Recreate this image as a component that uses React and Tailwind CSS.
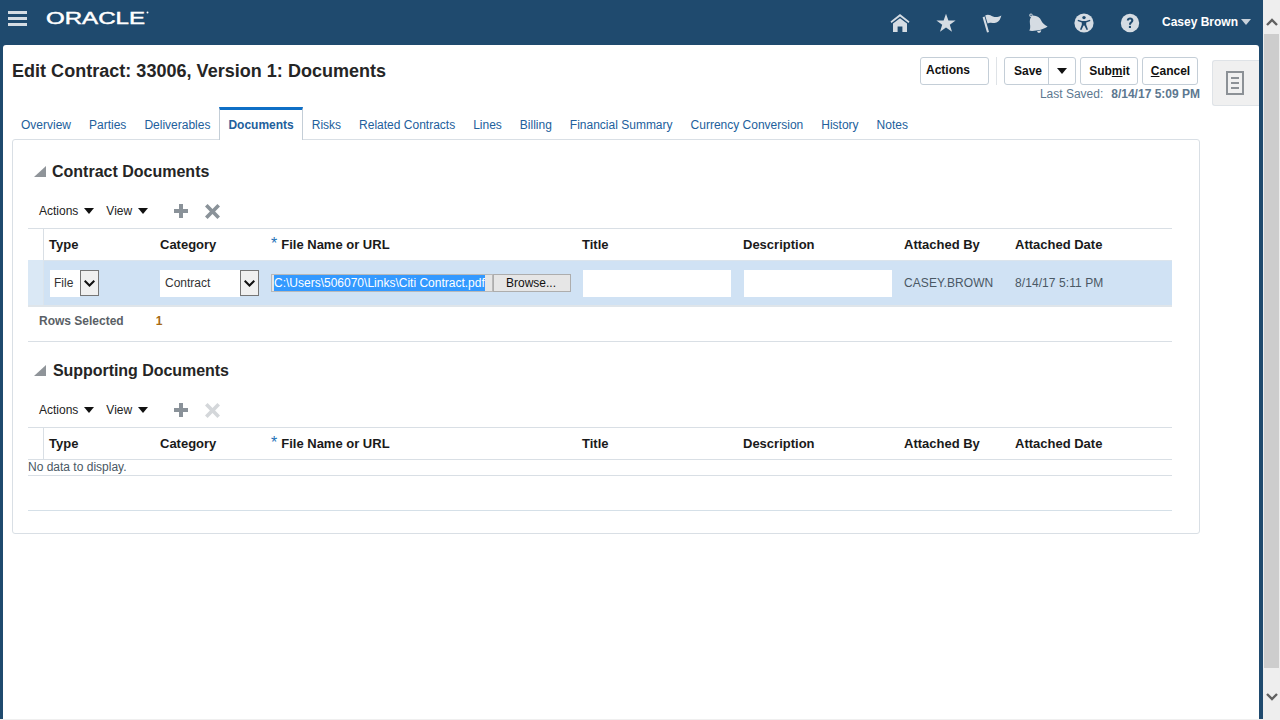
import React from "react";

const Font = "font-['Liberation_Sans',Arial,sans-serif]";

function Home() {
  return (
    <svg width="20" height="20" viewBox="0 0 20 20" fill="#d5dce3">
      <path d="M10 1 L19.5 8.5 L18.5 10 L10 3.4 L1.5 10 L0.5 8.5 Z" />
      <path d="M10 5.2 L17 10.6 L17 19 L12.4 19 L12.4 13.5 L7.6 13.5 L7.6 19 L3 19 L3 10.6 Z" />
    </svg>
  );
}
function Star() {
  return (
    <svg width="20" height="20" viewBox="0 0 20 20" fill="#d5dce3">
      <path d="M10 0.8 L12.4 7.4 L19.6 7.4 L13.8 11.7 L16 18.8 L10 14.5 L4 18.8 L6.2 11.7 L0.4 7.4 L7.6 7.4 Z" />
    </svg>
  );
}
function Flag() {
  return (
    <svg width="20" height="20" viewBox="0 0 20 20" fill="#d5dce3">
      <path d="M0.6 4.2 L2.6 3.6 L7 19 L5 19.6 Z" />
      <path d="M3.2 2.6 C6 0.6 8.5 2.4 11 3.4 C13.5 4.4 16 4 19.4 2.4 C18.6 5.6 17 8.6 14.5 9.6 C12 10.6 9.5 9 7 10 L5.6 10.6 Z" />
    </svg>
  );
}
function Bell() {
  return (
    <svg width="20" height="20" viewBox="0 0 20 20" fill="#d5dce3">
      <path d="M3 0.6 a1.7 1.7 0 1 1 -0.1 3.4 a1.7 1.7 0 0 1 0.1 -3.4 Z M3 1.6 a0.7 0.7 0 1 0 0.1 0 Z" fillRule="evenodd" />
      <path d="M4.5 2.6 C9 2.4 12 4.6 13.2 7.6 C14.2 10 16.4 12 19.6 13.6 C15.5 16.6 8 18.4 1.4 17.8 C3 14.5 1.8 11.5 1.8 8.8 C1.8 6 2.8 3.6 4.5 2.6 Z" />
      <path d="M9 18.2 L13.2 17.2 C13.2 18.8 12 19.8 10.9 19.8 C9.9 19.8 9.2 19 9 18.2 Z" />
    </svg>
  );
}
function Access() {
  return (
    <svg width="20" height="20" viewBox="0 0 20 20">
      <circle cx="10" cy="10" r="9.6" fill="#d5dce3" />
      <circle cx="10" cy="4.6" r="1.7" fill="#1f4a6e" />
      <path d="M4 6.8 L8 8.1 L12 8.1 L16 6.8 L16.4 8.1 L12.2 9.6 L12.2 11.8 L14 16.6 L12.6 17.1 L10.4 12.6 L9.6 12.6 L7.4 17.1 L6 16.6 L7.8 11.8 L7.8 9.6 L3.6 8.1 Z" fill="#1f4a6e" />
    </svg>
  );
}
function Help() {
  return (
    <svg width="20" height="20" viewBox="0 0 20 20">
      <circle cx="10" cy="10" r="9.2" fill="#d5dce3" />
      <path d="M6.8 7.6 C6.8 5.6 8.3 4.6 10.1 4.6 C12 4.6 13.4 5.7 13.4 7.4 C13.4 9.6 10.9 9.7 10.9 11.8 L9 11.8 C9 8.9 11.2 8.8 11.2 7.5 C11.2 6.8 10.8 6.4 10.1 6.4 C9.3 6.4 8.9 6.9 8.9 7.6 Z" fill="#1f4a6e" />
      <rect x="8.9" y="12.9" width="2.1" height="2.1" fill="#1f4a6e" />
    </svg>
  );
}

function Caret({ className = "" }) {
  return (
    <svg width="10" height="6" viewBox="0 0 10 6" className={className} fill="currentColor">
      <path d="M0 0 H10 L5 6 Z" />
    </svg>
  );
}

function Plus({ color = "#8a9299" }) {
  return (
    <svg width="14" height="14" viewBox="0 0 14 14" fill={color}>
      <path d="M5 0 H9 V5 H14 V9 H9 V14 H5 V9 H0 V5 H5 Z" />
    </svg>
  );
}
function Cross({ color = "#8a9299" }) {
  return (
    <svg width="15" height="15" viewBox="0 0 15 15" fill={color}>
      <path d="M2.6 0 L7.5 4.9 L12.4 0 L15 2.6 L10.1 7.5 L15 12.4 L12.4 15 L7.5 10.1 L2.6 15 L0 12.4 L4.9 7.5 L0 2.6 Z" />
    </svg>
  );
}

function SelectArrow({ w }) {
  return (
    <div className={`${w} h-[26px] shrink-0 bg-[#f0f0f0] border border-[#767676] flex items-center justify-center`}>
      <svg width="11" height="7" viewBox="0 0 11 7" fill="none" stroke="#111" strokeWidth="2">
        <path d="M0.7 0.7 L5.5 5.5 L10.3 0.7" />
      </svg>
    </div>
  );
}

const cols = "grid grid-cols-[16px_111px_111px_311px_161px_161px_111px_1fr]";

function HeaderRow() {
  const names = ["Type", "Category", null, "Title", "Description", "Attached By", "Attached Date"];
  return (
    <div className={`${cols} h-[32px] border-t border-[#d9dfe5] text-[13px] font-bold text-[#1a1a1a]`}>
      <div className="border-r border-[#d9dfe5]" />
      {names.map((n, i) => (
        <div key={i} className="pl-[5px] flex items-center">
          {n === null ? (
            <span className="flex items-center">
              <span className="text-[16px] font-normal leading-[16px] text-[#1f72b8] mr-[4px] -mt-[2px]">*</span>
              File Name or URL
            </span>
          ) : (
            n
          )}
        </div>
      ))}
    </div>
  );
}

function Toolbar({ crossColor }) {
  return (
    <div className="flex items-center h-[33px] pb-[1px] pl-[11px] text-[12px] text-[#222]">
      <span>Actions</span>
      <Caret className="ml-[6px] text-[#111]" />
      <span className="ml-[12px]">View</span>
      <Caret className="ml-[6px] text-[#111]" />
      <span className="ml-[26px]"><Plus /></span>
      <span className="ml-[17px]"><Cross color={crossColor} /></span>
    </div>
  );
}

function SectionTitle({ children, gap }) {
  return (
    <div className="flex items-center h-[24px]">
      <svg width="12" height="12" viewBox="0 0 12 12" fill="#8f9499" className="ml-[6px]">
        <path d="M12 0 V11 H0 Z" />
      </svg>
      <span className={`${gap} text-[16px] font-bold text-[#252525]`}>{children}</span>
    </div>
  );
}

function Btn({ w, children }) {
  return (
    <div className={`${w} h-[28px] pl-[1px] border border-[#c4ced7] rounded-[3px] bg-white flex items-center justify-center text-[12px] font-bold text-[#111]`}>
      {children}
    </div>
  );
}

export default function App() {
  const tabs = ["Overview", "Parties", "Deliverables", "Documents", "Risks", "Related Contracts", "Lines", "Billing", "Financial Summary", "Currency Conversion", "History", "Notes"];
  return (
    <div className={`${Font} w-[1280px] h-[720px] flex overflow-hidden bg-[#efefef]`}>
      <div className="w-[1263px] h-[719px] flex flex-col bg-[#1f4a6e]">
        <header className="h-[45px] shrink-0 flex items-center">
          <div className="ml-[8px] -mt-[8px] w-[19px] h-[15px] flex flex-col justify-between">
            <div className="h-[3px] bg-[#d5dce3]" />
            <div className="h-[3px] bg-[#d5dce3]" />
            <div className="h-[3px] bg-[#d5dce3]" />
          </div>
          <svg width="104" height="29" viewBox="0 0 104 29" className="ml-[19px]">
            <text x="0" y="15.5" fill="#ffffff" stroke="#ffffff" strokeWidth="0.45" fontFamily="'Liberation Sans', Arial, sans-serif" fontSize="16.5" textLength="99" lengthAdjust="spacingAndGlyphs">ORACLE</text>
            <circle cx="101.5" cy="4.5" r="1" fill="#fff" />
          </svg>
          <div className="ml-[740px] flex items-center gap-[26px]">
            <Home /><Star /><Flag /><Bell /><Access /><Help />
          </div>
          <span className="ml-[22px] -mt-[2px] text-[12px] font-bold text-white">Casey Brown</span>
          <Caret className="ml-[3px] -mt-[2px] text-[#c8d1da]" />
        </header>
        <div className="flex-1 ml-[3px] mr-[4px] bg-white rounded-tl-[3px] rounded-tr-[3px] flex">
          <div className="w-[1197px] pl-[9px]">
            <div className="flex pt-[12px] h-[62px]">
              <h1 className="mt-[4px] text-[18px] font-bold text-[#252525] leading-[20px] whitespace-nowrap tracking-[0.025px]">Edit Contract: 33006, Version 1: Documents</h1>
              <div className="ml-auto flex flex-col items-end">
                <div className="flex items-center mr-[1px]">
                  <div className="w-[69px] h-[28px] border border-[#c4ced7] rounded-[3px] bg-white flex items-start pl-[5px] pt-[3px] text-[12px] font-bold text-[#111]">Actions</div>
                  <div className="w-px h-[28px] bg-[#dfe3e7] mx-[7px]" />
                  <div className="w-[72px] h-[28px] border border-[#c4ced7] rounded-[3px] flex items-center text-[12px] font-bold text-[#111]">
                    <span className="w-[44px] h-full pl-[3px] border-r border-[#c4ced7] flex items-center justify-center">Save</span>
                    <span className="flex-1 flex justify-center"><Caret className="text-[#111]" /></span>
                  </div>
                  <div className="ml-[4px]"><Btn w="w-[58px]">Sub<u>m</u>it</Btn></div>
                  <div className="ml-[4px] mr-[1px]"><Btn w="w-[56px]"><u>C</u>ancel</Btn></div>
                </div>
                <div className="mt-[2px] text-[12px] leading-[14px] text-[#5d7890] whitespace-nowrap">
                  Last Saved:<span className="ml-[8px] font-bold">8/14/17 5:09 PM</span>
                </div>
              </div>
            </div>
            <nav className="flex h-[33px] text-[12px] text-[#22609c] relative z-10">
              {tabs.map((t) =>
                t === "Documents" ? (
                  <div key={t} className="h-[33px] bg-white border-t-[3px] border-t-[#0f6fc6] border-x border-x-[#c4ced7] px-[8px] font-bold flex items-center text-[#22609c]">{t}</div>
                ) : (
                  <div key={t} className="px-[9px] flex items-center pt-[3px]">{t}</div>
                )
              )}
            </nav>
            <section className="-mt-px h-[395px] border border-[#d9dfe5] rounded-[3px] pl-[15px] pr-[27px] pt-[20px]">
              <SectionTitle gap="ml-[6px]">Contract Documents</SectionTitle>
              <div className="mt-[11px]"><Toolbar crossColor="#8a9299" /></div>
              <HeaderRow />
              <div className={`${cols} h-[45px] bg-[#d0e2f4] text-[12px]`}>
                <div className="bg-[#dae8f5] border-r border-[#dbe4ec]" />
                <div className="border-t border-[#dbe4ec] pl-[6px] flex items-center">
                  <div className="w-[30px] h-[27px] bg-white flex items-center pl-[4px] text-[#333]">File</div>
                  <SelectArrow w="w-[19px]" />
                </div>
                <div className="border-t border-[#dbe4ec] pl-[5px] flex items-center">
                  <div className="w-[80px] h-[27px] bg-white flex items-center pl-[5px] text-[#333]">Contract</div>
                  <SelectArrow w="w-[19px]" />
                </div>
                <div className="border-t border-[#dbe4ec] pl-[5px] flex items-center">
                  <div className="w-[222px] h-[18px] bg-[#e6e6e6] border border-[#b9b9b9] flex items-center pl-[2px]">
                    <span className="bg-[#3399ff] text-white leading-[16px] whitespace-nowrap">C:\Users\506070\Links\Citi Contract.pdf</span>
                  </div>
                  <div className="w-[78px] h-[18px] pr-[2px] bg-[#e6e6e6] border border-[#adadad] flex items-center justify-center text-[#111]">Browse...</div>
                </div>
                <div className="border-t border-[#dbe4ec] pl-[6px] flex items-center"><div className="w-[148px] h-[27px] bg-white" /></div>
                <div className="border-t border-[#dbe4ec] pl-[6px] flex items-center"><div className="w-[148px] h-[27px] bg-white" /></div>
                <div className="border-t border-[#dbe4ec] pl-[5px] flex items-center text-[#4a5864] tracking-[0.08px]">CASEY.BROWN</div>
                <div className="border-t border-[#dbe4ec] pl-[5px] flex items-center text-[#4a5864] tracking-[0.08px]">8/14/17 5:11 PM</div>
              </div>
              <div className="h-[2px] bg-[#dfe5ea]" />
              <div className="h-[35px] flex items-start pt-[7px] pl-[11px] text-[12px] leading-[14px] border-b border-[#d9dfe5]">
                <span className="font-bold text-[#5a5f66]">Rows Selected</span>
                <span className="ml-[32px] font-bold text-[#a76a14]">1</span>
              </div>
              <div className="mt-[17px]"><SectionTitle gap="ml-[7px] tracking-[-0.05px]">Supporting Documents</SectionTitle></div>
              <div className="mt-[11px]"><Toolbar crossColor="#d4d7da" /></div>
              <HeaderRow />
              <div className="border-t border-[#d9dfe5] h-[15px] border-b text-[12px] leading-[14px] text-[#4a5864] box-content">No data to display.</div>
              <div className="h-[35px] border-b border-[#d5e0e8]" />
            </section>
          </div>
          <div className="ml-[12px] mt-[15px] w-[47px] h-[46px] pr-[2px] bg-[#f0f0f0] border border-r-0 border-[#dfe3e7] rounded-l-[3px] flex items-center justify-center">
            <svg width="18" height="24" viewBox="0 0 18 24" fill="none" stroke="#8c9196" strokeWidth="2">
              <rect x="1" y="1" width="16" height="22" />
              <path d="M5 7 H13 M5 12 H13 M5 17 H13" />
            </svg>
          </div>
        </div>
      </div>
      <aside className="w-[17px] h-[720px] bg-[#eeeeee] flex flex-col items-center shrink-0">
        <div className="h-[34px] flex items-end pb-[8px]">
          <svg width="12" height="8" viewBox="0 0 12 8" fill="none" stroke="#606060" strokeWidth="2.4"><path d="M1 7 L6 2 L11 7" /></svg>
        </div>
        <div className="w-[15px] h-[634px] bg-[#cdcdcd]" />
        <div className="flex-1 flex items-center pt-[6px]">
          <svg width="12" height="8" viewBox="0 0 12 8" fill="none" stroke="#606060" strokeWidth="2.4"><path d="M1 1 L6 6 L11 1" /></svg>
        </div>
      </aside>
    </div>
  );
}
